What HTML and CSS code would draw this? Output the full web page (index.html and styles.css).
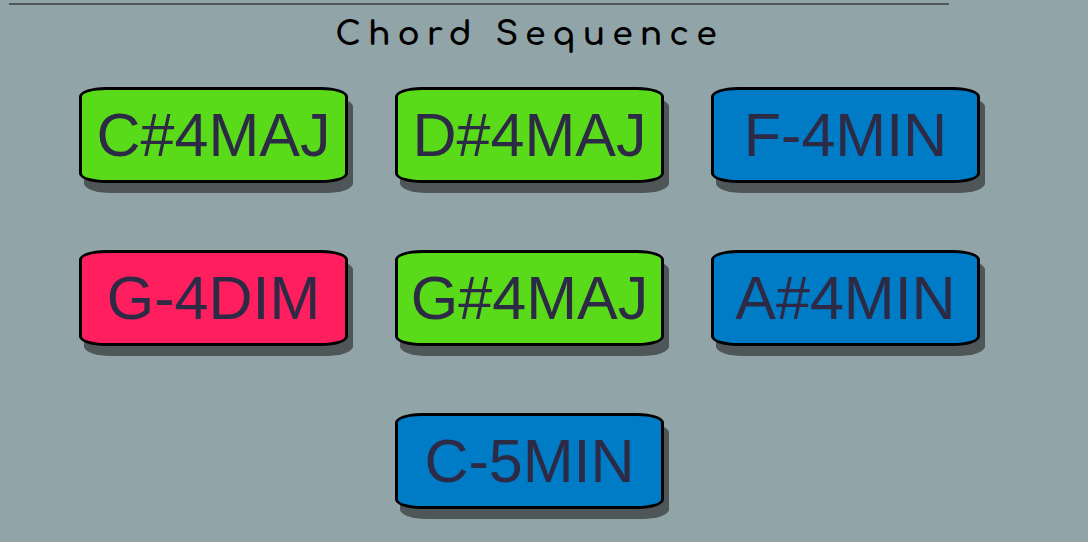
FILE: index.html
```html
<!DOCTYPE html>
<html lang="en">
<head>
<meta charset="utf-8">
<meta name="viewport" content="width=device-width, initial-scale=1">
<title>Chord Sequence</title>
<link rel="stylesheet" href="styles.css">
</head>
<body>
<hr class="divider">
<main class="sequence">
  <h1 class="title">Chord Sequence</h1>
  <div class="chords">
    <button type="button" class="chord major">C#4MAJ</button>
    <button type="button" class="chord major">D#4MAJ</button>
    <button type="button" class="chord minor">F-4MIN</button>
    <button type="button" class="chord diminished">G-4DIM</button>
    <button type="button" class="chord major">G#4MAJ</button>
    <button type="button" class="chord minor">A#4MIN</button>
    <button type="button" class="chord minor">C-5MIN</button>
  </div>
</main>
</body>
</html>
```
FILE: styles.css
```css
* {
  box-sizing: border-box;
}

body {
  margin: 0;
  background: #91a4a8;
  font-family: "Liberation Sans", Arial, sans-serif;
}

.divider {
  height: 2px;
  margin: 3px 139px 0 9px;
  border: 0;
  background: #4e5658;
}

.sequence {
  padding: 10px 29px 22px 0;
}

.title {
  margin: 0;
  color: #000;
  font-family: Comfortaa, Quicksand, Lato, sans-serif;
  font-size: 33px;
  font-weight: 700;
  line-height: 40px;
  letter-spacing: 7px;
  text-align: center;
}

.chords {
  display: flex;
  flex-wrap: wrap;
  justify-content: center;
  gap: 67px 47px;
  max-width: 960px;
  margin: 32px auto 0;
}

.chord {
  width: 269px;
  padding: 10px 0;
  border: 3px solid #000;
  border-radius: 10%;
  box-shadow: 5px 10px #4e5658;
  color: #2d2a45;
  font-family: inherit;
  font-size: 61px;
  line-height: 70px;
  text-align: center;
  cursor: pointer;
}

.major {
  background: #5adb1a;
}

.minor {
  background: #007bc5;
}

.diminished {
  background: #ff1f5e;
}
```
